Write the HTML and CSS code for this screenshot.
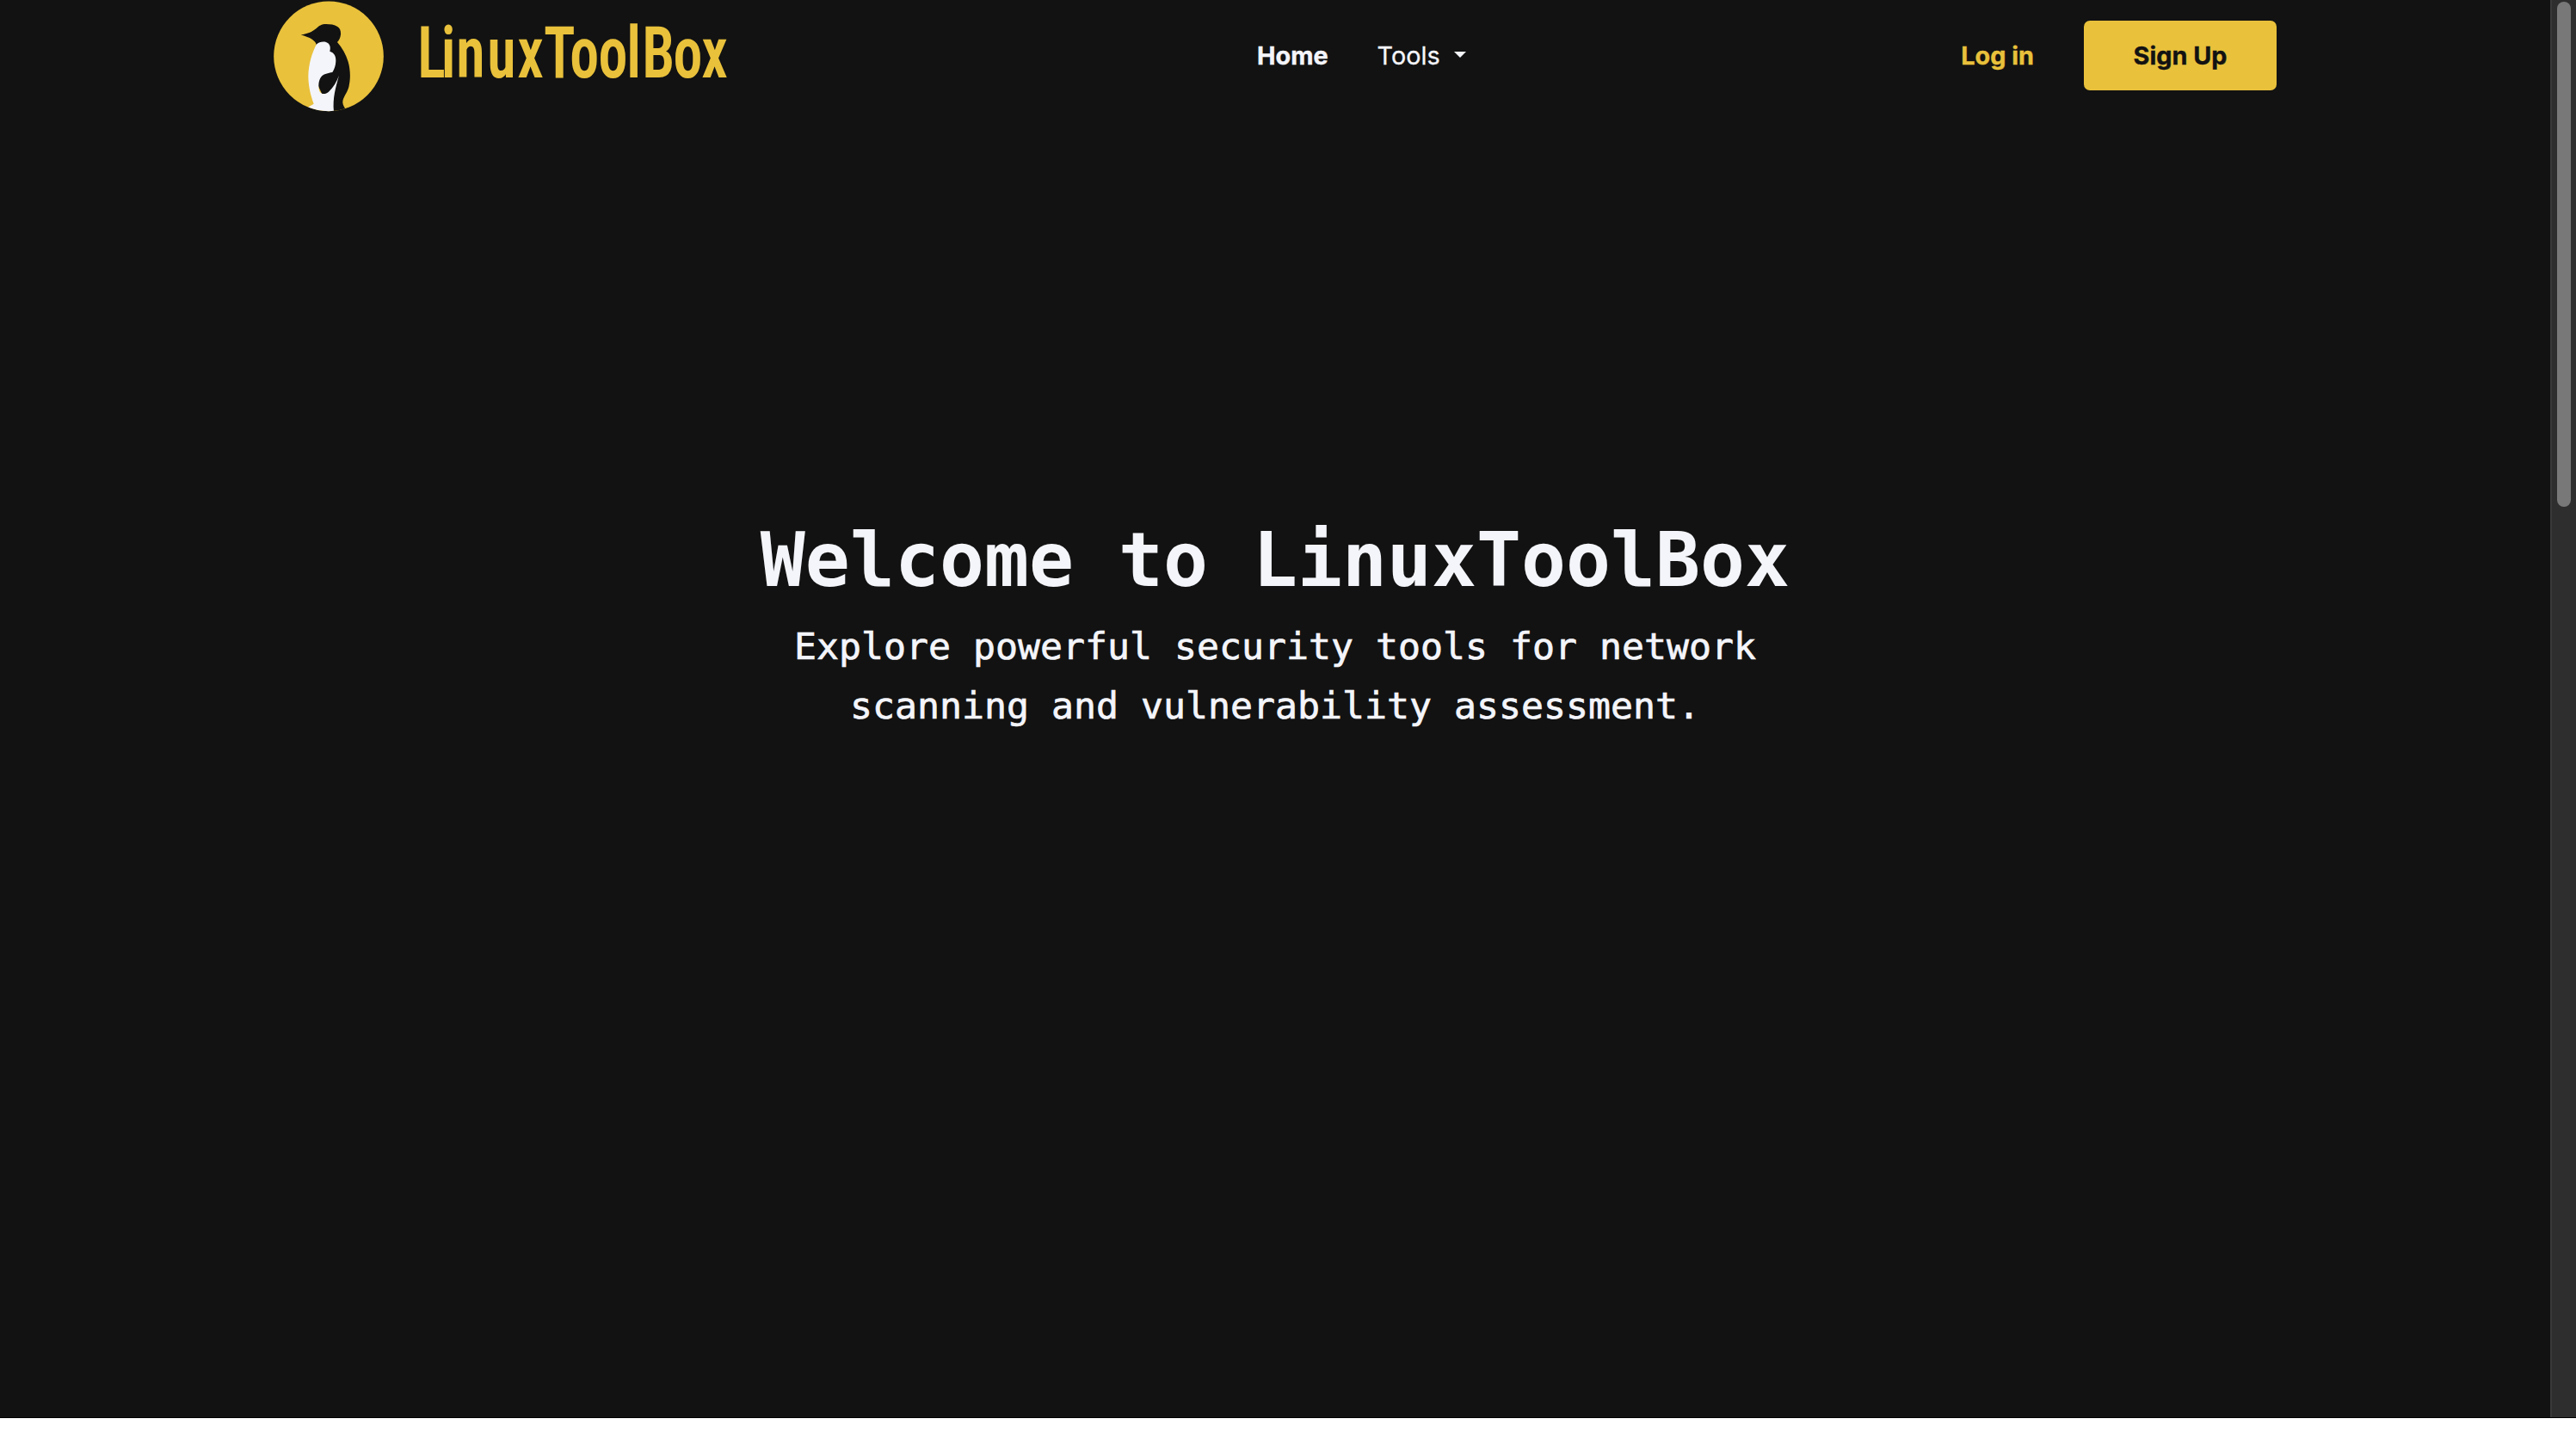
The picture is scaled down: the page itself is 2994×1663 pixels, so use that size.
FILE: index.html
```html
<!DOCTYPE html>
<html lang="en">
<head>
<meta charset="utf-8">
<title>LinuxToolBox</title>
<link rel="stylesheet" href="styles.css">
</head>
<body>
<div class="page">
  <div class="content">
    <header class="navbar">
      <a class="brand">
        <svg class="brand-mark" viewBox="0 0 435 405">
          <defs><clipPath id="disc"><circle cx="216" cy="196" r="191.5"/></clipPath></defs>
          <circle cx="216" cy="196" r="191.5" fill="#e9c13b"/>
          <g clip-path="url(#disc)">
            <path fill="#121212" d="M119 121C143 118 160 110 173 99C182 90 191 84 207 84C222 84 236 86 247 93C256 99 259 109 258 121C257 133 251 142 246 147C264 167 276 190 284 215C293 247 292 278 286 304C280 326 264 341 265 358C266 367 270 374 276 382L276 405L228 405L180 300L173 155C167 138 149 131 119 121Z"/>
            <path fill="#f4f5fa" d="M173 155C182 147 195 144 207 147C220 151 224 164 220 179C235 183 242 196 241 213C240 230 236 242 229 252C214 255 199 257 190 268C180 280 179 304 184 318C190 330 205 330 216 320C233 304 244 284 252 263C241 303 229 341 234 390L140 390L146 373L164 362C153 333 145 300 145 265C146 224 157 186 173 155Z"/>
          </g>
        </svg>
        <svg class="wordmark" viewBox="0 0 400 135"><text transform="scale(.82 1)" y="90" x="18.5 52 73.5 117.5 160 197.5 234.5 275 315 337 381 421">LinuxToolBox</text></svg>
      </a>
      <nav class="menu">
        <a class="active">Home</a>
        <a class="dropdown">Tools<span class="caret"></span></a>
      </nav>
      <div class="actions">
        <a class="login">Log in</a>
        <a class="signup">Sign Up</a>
      </div>
    </header>
    <main class="hero">
      <h1>Welcome to LinuxToolBox</h1>
      <p>Explore powerful security tools for network scanning and vulnerability assessment.</p>
    </main>
  </div>
  <div class="scrollbar"><div class="thumb"></div></div>
</div>
</body>
</html>
```
FILE: styles.css
```css
* { box-sizing: border-box; }
body { margin: 0; background: #fff; }
.page { display: flex; height: 1648px; background: #121212; border-bottom: 1px solid #000; overflow: hidden; }
.content { flex: 1; display: flex; flex-direction: column; }
.navbar { display: grid; grid-template-columns: 1151px 1fr auto; align-items: center; height: 129px; padding: 0 318px 0 310px; font: 400 28.8px/1 Inter, sans-serif; color: #f4f5fa; grid-template-rows: 129px; }
.brand { display: flex; gap: 15px; height: 135px; align-self: start; }
.brand-mark { width: 145px; height: 135px; }
.wordmark { width: 400px; height: 135px; overflow: visible; }
.wordmark text { font: 620 83px Roboto, sans-serif; font-stretch: 75%; fill: #e9c13b; }
.menu { display: flex; gap: 57px; align-items: center; padding-top: 1px; }
.active, .login, .signup { font-weight: 700; -webkit-text-stroke: 0.4px currentColor; }
.dropdown { display: flex; align-items: center; gap: 16px; -webkit-text-stroke: 0.3px currentColor; }
.caret { border: 7.5px solid transparent; border-top-color: #f4f5fa; border-bottom: 0; margin-bottom: 2px; }
.actions { display: flex; align-items: center; gap: 58px; }
.login { color: #e9c13b; padding-top: 1px; }
.signup { display: flex; align-items: center; justify-content: center; width: 224px; height: 81px; padding-top: 1px; border-radius: 7px; background: #e9c13b; color: #121212; }
.hero { display: flex; flex-direction: column; align-items: center; padding-top: 470px; color: #f4f5fa; font-family: "DejaVu Sans Mono", monospace; text-align: center; }
.hero h1 { margin: 0; font-size: 86.4px; line-height: 104px; font-weight: 700; }
.hero p { margin: 14px 0 0; width: 1200px; font-size: 43.2px; line-height: 69px; -webkit-text-stroke: 0.7px currentColor; }
.scrollbar { width: 30px; background: #2e2e2e; border-left: 2px solid #393939; padding: 2px 0 0 6px; }
.thumb { width: 16px; height: 587px; border-radius: 8px; background: #787878; }
```
